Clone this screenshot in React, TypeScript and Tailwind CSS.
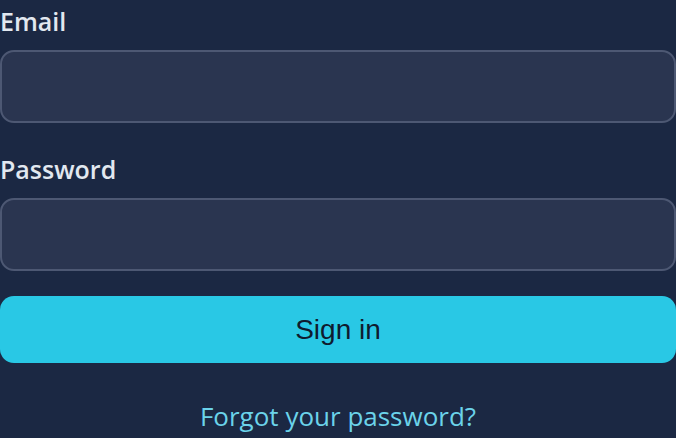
import React from "react";

export default function App() {
  const label = "block text-[25px] leading-[42px] font-semibold text-[#e2e8f0] mb-[8px]";
  const input =
    "block w-full h-[73px] rounded-[14px] border-2 border-[#4d5873] bg-[#2a3550] outline-none px-4 text-[#e2e8f0]";
  return (
    <div
      className="w-[676px] h-[438px] overflow-hidden bg-[#1b2843] flex flex-col"
      style={{ fontFamily: '"Open Sans", "Noto Sans", sans-serif' }}
    >
      <div className="flex flex-col">
        <label className={label}>Email</label>
        <input type="email" className={input} />
      </div>
      <div className="flex flex-col mt-[25px]">
        <label className={label}>Password</label>
        <input type="password" className={input} />
      </div>
      <button
        className="mt-[25px] h-[67px] w-full rounded-[14px] bg-[#29c8e5] text-[28px] text-[#0f1b2f]"
        style={{ fontFamily: '"Liberation Sans", Arial, sans-serif' }}
      >
        Sign in
      </button>
      <div className="mt-[35px] text-center text-[26px] leading-[36px] text-[#6bd3ea]">
        Forgot your password?
      </div>
    </div>
  );
}
